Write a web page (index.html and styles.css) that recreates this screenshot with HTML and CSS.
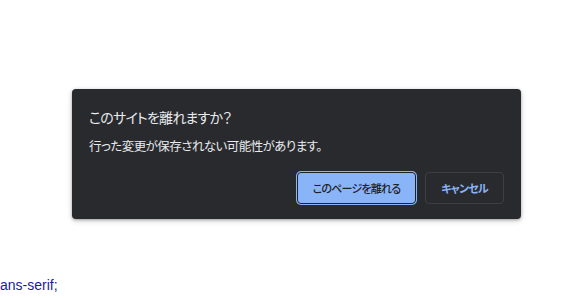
FILE: index.html
```html
<!DOCTYPE html>
<html lang="ja">
<head>
<meta charset="utf-8">
<link rel="stylesheet" href="styles.css">
</head>
<body>
<div class="page-text">ans-serif;</div>
<div class="dialog" role="dialog">
  <div class="title">このサイトを離れますか？</div>
  <div class="message">行った変更が保存されない可能性があります。</div>
  <div class="actions">
    <button class="btn primary">このページを離れる</button>
    <button class="btn secondary">キャンセル</button>
  </div>
</div>
</body>
</html>
```
FILE: styles.css
```css
html, body {
  margin: 0;
  padding: 0;
  background: #ffffff;
  width: 568px;
  height: 298px;
  overflow: hidden;
}
body {
  position: relative;
  font-family: "Noto Sans CJK JP", "Noto Sans", sans-serif;
}
.page-text {
  position: absolute;
  left: 0;
  top: 276px;
  font-family: "Liberation Sans", Arial, sans-serif;
  font-size: 14px;
  line-height: 18px;
  color: #1a1a9c;
}
.dialog {
  position: absolute;
  left: 72px;
  top: 89px;
  width: 449px;
  height: 130px;
  box-sizing: border-box;
  background: #292a2d;
  border-radius: 4px;
  box-shadow: 0 1px 3px rgba(0,0,0,0.3), 0 2px 6px rgba(0,0,0,0.15);
  padding: 17px 17px 15px 17px;
  display: flex;
  flex-direction: column;
  color: #e8eaed;
  font-feature-settings: "palt";
}
.title {
  font-size: 14px;
  line-height: 22px;
  letter-spacing: -0.8px;
}
.message {
  margin-top: 8px;
  font-size: 12.5px;
  line-height: 20px;
  letter-spacing: -0.55px;
}
.actions {
  margin-top: auto;
  display: flex;
  justify-content: flex-end;
  gap: 9px;
}
.btn {
  height: 32px;
  box-sizing: border-box;
  border-radius: 4px;
  font-family: "Noto Sans CJK JP", "Noto Sans", sans-serif;
  font-feature-settings: "palt";
  font-size: 11px;
  font-weight: 500;
  letter-spacing: -0.8px;
  padding: 0;
  white-space: nowrap;
  text-align: center;
  cursor: pointer;
}
.primary {
  width: 119px;
  background: #8ab4f8;
  color: #202124;
  border: 1px solid #1f2227;
  box-shadow: 0 0 0 1px #8ab4f8;
}
.secondary {
  width: 79px;
  background: transparent;
  color: #8ab4f8;
  border: 1px solid #3c4043;
  font-weight: 700;
}
```
